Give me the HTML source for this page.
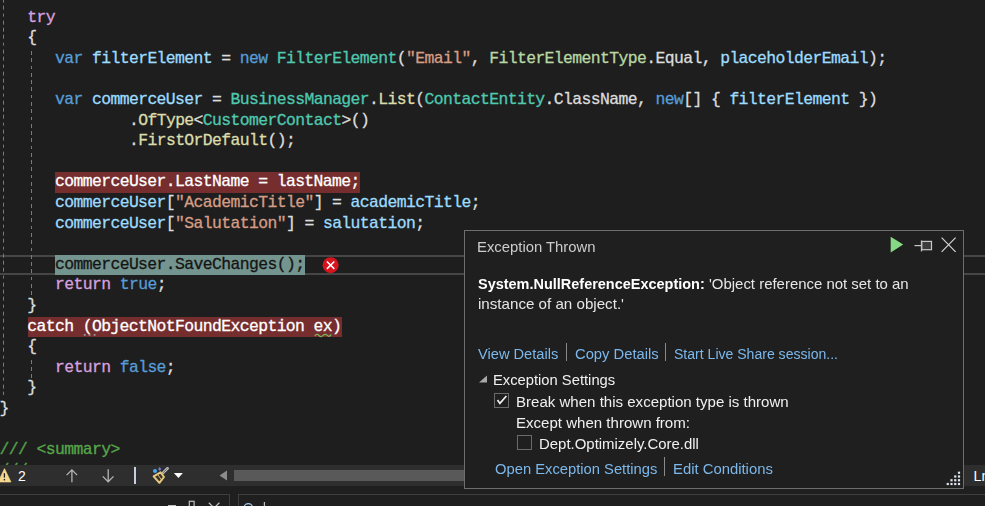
<!DOCTYPE html>
<html><head><meta charset="utf-8"><style>
html,body{margin:0;padding:0;}
body{width:985px;height:506px;overflow:hidden;position:relative;background:#1e1e1e;}
.ln{position:absolute;left:0;height:20.60px;line-height:20.60px;white-space:pre;font-family:"Liberation Mono",monospace;font-size:16.40px;letter-spacing:-0.6001px;-webkit-text-stroke-width:0.3px;color:#dcdcdc;}
.kw{color:#569cd6}.ctl{color:#d8a0df}.ty{color:#4ec9b0}.en{color:#b8d7a3}.me{color:#dcdcaa}.lo{color:#9cdcfe}.st{color:#d69d85}.pu{color:#dcdcdc}.cm{color:#55a049}.cm2{color:#57a64a}.wh{color:#ffffff}.dk{color:#141414}
.hl{position:absolute;}
.guide{position:absolute;width:1px;background:repeating-linear-gradient(to bottom,#7a7a7a 0 3.7px,transparent 3.7px 7.28px);}
.sans{font-family:"Liberation Sans",sans-serif;position:absolute;white-space:pre;will-change:transform;}
svg{position:absolute;}
</style></head><body>

<div class="hl" style="left:0.00px;top:255.00px;width:985.00px;height:2.00px;background:#464646;"></div>
<div class="hl" style="left:0.00px;top:273.00px;width:985.00px;height:2.00px;background:#464646;"></div>
<div class="hl" style="left:55.00px;top:172.00px;width:305.00px;height:21.00px;background:#762d2e;"></div>
<div class="hl" style="left:55.00px;top:255.00px;width:250.00px;height:20.00px;background:#74958f;"></div>
<div class="hl" style="left:27.50px;top:317.00px;width:314.30px;height:20.00px;background:#762d2e;"></div>
<div class="guide" style="left:3px;top:0;height:395.3px;background-position:0 -1.38px"></div>
<div class="guide" style="left:31px;top:50.9px;height:243.8px"></div>
<div class="guide" style="left:31px;top:360px;height:17.5px;background-image:repeating-linear-gradient(to bottom,#7a7a7a 0 3.6px,transparent 3.6px 7.1px)"></div>
<div class="ln" style="top:7.60px;left:27.28px"><span class="ctl">try</span></div>
<div class="ln" style="top:28.20px;left:27.28px"><span class="pu">{</span></div>
<div class="ln" style="top:48.80px;left:55.01px"><span class="kw">var</span><span class="pu"> </span><span class="lo">filterElement</span><span class="pu"> = </span><span class="kw">new</span><span class="pu"> </span><span class="ty">FilterElement</span><span class="pu">(</span><span class="st">"Email"</span><span class="pu">, </span><span class="en">FilterElementType</span><span class="pu">.</span><span class="pu">Equal</span><span class="pu">, </span><span class="lo">placeholderEmail</span><span class="pu">);</span></div>
<div class="ln" style="top:90.00px;left:55.01px"><span class="kw">var</span><span class="pu"> </span><span class="lo">commerceUser</span><span class="pu"> = </span><span class="ty">BusinessManager</span><span class="pu">.</span><span class="me">List</span><span class="pu">(</span><span class="ty">ContactEntity</span><span class="pu">.</span><span class="pu">ClassName</span><span class="pu">, </span><span class="kw">new</span><span class="pu">[] { </span><span class="lo">filterElement</span><span class="pu"> })</span></div>
<div class="ln" style="top:110.60px;left:128.94px"><span class="pu">.</span><span class="me">OfType</span><span class="pu">&lt;</span><span class="ty">CustomerContact</span><span class="pu">&gt;()</span></div>
<div class="ln" style="top:131.20px;left:128.94px"><span class="pu">.</span><span class="me">FirstOrDefault</span><span class="pu">();</span></div>
<div class="ln" style="top:172.40px;left:55.01px"><span class="wh">commerceUser.LastName = lastName;</span></div>
<div class="ln" style="top:193.00px;left:55.01px"><span class="lo">commerceUser</span><span class="pu">[</span><span class="st">"AcademicTitle"</span><span class="pu">] = </span><span class="lo">academicTitle</span><span class="pu">;</span></div>
<div class="ln" style="top:213.60px;left:55.01px"><span class="lo">commerceUser</span><span class="pu">[</span><span class="st">"Salutation"</span><span class="pu">] = </span><span class="lo">salutation</span><span class="pu">;</span></div>
<div class="ln" style="top:254.80px;left:55.01px"><span class="dk">commerceUser.SaveChanges();</span></div>
<div class="ln" style="top:275.40px;left:55.01px"><span class="ctl">return</span><span class="pu"> </span><span class="kw">true</span><span class="pu">;</span></div>
<div class="ln" style="top:296.00px;left:27.28px"><span class="pu">}</span></div>
<div class="ln" style="top:316.60px;left:27.28px"><span class="wh">catch (ObjectNotFoundException ex)</span></div>
<div class="ln" style="top:337.20px;left:27.28px"><span class="pu">{</span></div>
<div class="ln" style="top:357.80px;left:55.01px"><span class="ctl">return</span><span class="pu"> </span><span class="kw">false</span><span class="pu">;</span></div>
<div class="ln" style="top:378.40px;left:27.28px"><span class="pu">}</span></div>
<div class="ln" style="top:399.00px;left:-0.44px"><span class="pu">}</span></div>
<div class="ln" style="top:440.20px;left:-0.44px"><span class="cm">///</span><span class="pu"> </span><span class="cm2">&lt;summary&gt;</span></div>
<div class="ln" style="top:460.80px;left:-0.44px"><span class="cm">///</span></div>
<svg style="left:80px;top:330px" width="20" height="10" viewBox="80 330 20 10"><rect x="83.8" y="334" width="1.8" height="1.8" fill="#9a9a9a"/><rect x="88.7" y="334" width="1.8" height="1.8" fill="#9a9a9a"/><rect x="93.7" y="334" width="1.8" height="1.8" fill="#9a9a9a"/></svg>
<svg style="left:312px;top:331px" width="22" height="8" viewBox="312 331 22 8"><path d="M314.8 336 Q316.9 333.2 319 335.5 Q321.1 337.6 323.1 335.4 Q325.2 333.2 327.3 335.4 Q329.3 337.6 331.2 334.4" fill="none" stroke="#7cb35a" stroke-width="1.3"/></svg>
<svg style="left:322px;top:257px" width="17" height="17" viewBox="0 0 17 17"><circle cx="8.6" cy="8.2" r="8" fill="#d7141e"/><path d="M4.9 4.5 L12.3 11.9 M12.3 4.5 L4.9 11.9" stroke="#fff" stroke-width="1.5"/></svg>
<div class="hl" style="left:0.00px;top:465.00px;width:985.00px;height:21.00px;background:#2e2e2e;"></div>
<div class="hl" style="left:0.00px;top:486.00px;width:985.00px;height:20.00px;background:#1f1f1f;"></div>
<div class="hl" style="left:0.00px;top:494.00px;width:230.00px;height:1.00px;background:#3f3f3f;"></div>
<div class="hl" style="left:229.00px;top:494.00px;width:1.00px;height:12.00px;background:#3f3f3f;"></div>
<div class="hl" style="left:238.00px;top:494.00px;width:747.00px;height:1.00px;background:#3f3f3f;"></div>
<div class="hl" style="left:238.00px;top:494.00px;width:1.00px;height:12.00px;background:#3f3f3f;"></div>
<svg style="left:0;top:466px" width="14" height="18" viewBox="0 466 14 18"><path d="M4.5 468.6 L11 482 L-2 482 Z" fill="#f5d88f" stroke="#f5d88f" stroke-width="0.6" stroke-linejoin="round"/><path d="M4.4 473.2 L4.4 477.6" stroke="#1e1e1e" stroke-width="1.3"/><rect x="3.7" y="479" width="1.4" height="1.4" fill="#1e1e1e"/></svg>
<div class="sans" style="left:18.00px;top:466.25px;font-size:14.00px;line-height:20px;color:#ffffff;font-weight:normal;will-change:auto">2</div>
<svg style="left:60px;top:466px" width="60" height="20" viewBox="60 466 60 20"><path d="M71.9 470.2 L71.9 482.3 M66.6 475.1 L71.9 469.9 L77.1 475.1" fill="none" stroke="#b4b4b4" stroke-width="1.3"/><path d="M108.2 469.3 L108.2 481.5 M102.8 476.4 L108.2 481.8 L113.5 476.4" fill="none" stroke="#b4b4b4" stroke-width="1.3"/></svg>
<div class="hl" style="left:134.00px;top:467.20px;width:2.20px;height:16.60px;background:#c8d0e0;"></div>
<svg style="left:148px;top:465px" width="38" height="21" viewBox="148 465 38 21"><circle cx="155" cy="471" r="2" fill="#4aa8f0"/><path d="M159.7 466.9 L161.2 468.9 L159.7 470.9 L158.2 468.9 Z" fill="#7b7bd8"/><path d="M167.6 468.3 L162.2 473.6" stroke="#c8c8c8" stroke-width="2.6" stroke-linecap="round"/><path d="M167.6 468.3 L162.2 473.6" stroke="#555" stroke-width="0.9"/><path d="M153.6 476.4 L160.6 472.4 L164 477 L159.4 482.8 Z" fill="#3a3428" stroke="#e6c77f" stroke-width="2" stroke-linejoin="round"/><path d="M157.6 474.4 L161.8 480.4" stroke="#e6c77f" stroke-width="0.9"/><path d="M173.9 472.9 L182.9 472.9 L178.4 478.1 Z" fill="#ffffff"/></svg>
<svg style="left:218px;top:469px" width="12" height="14" viewBox="218 469 12 14"><path d="M227 470.6 L227 480.5 L219.5 475.5 Z" fill="#8c8c8c"/></svg>
<div class="hl" style="left:234.00px;top:470.20px;width:230.00px;height:10.80px;background:#595959;"></div>
<div class="hl" style="left:167.50px;top:504.60px;width:8.60px;height:2.00px;background:#c0c0c0;"></div>
<svg style="left:186px;top:500px" width="40" height="6" viewBox="186 500 40 6"><rect x="189.3" y="501.3" width="4.8" height="8" fill="none" stroke="#c0c0c0" stroke-width="1.2"/><path d="M208.8 502.8 L219.4 513 M219.4 502.8 L208.8 513" stroke="#c0c0c0" stroke-width="1.2"/><circle cx="248.3" cy="508" r="4.4" fill="none" stroke="#7fb0e0" stroke-width="1.2"/><path d="M264.4 502 L264.4 510" stroke="#c0c0c0" stroke-width="1.2"/></svg>
<svg style="left:240px;top:500px" width="30" height="6" viewBox="240 500 30 6"><circle cx="248.3" cy="508" r="4.4" fill="none" stroke="#9ec4ea" stroke-width="1.2"/><path d="M264.4 502 L264.4 510" stroke="#c0c0c0" stroke-width="1.2"/></svg>
<div class="hl" style="left:464.00px;top:230.00px;width:498.00px;height:257.00px;background:#1f1f1f;border:1px solid #6e6e6e"></div>
<div class="sans" style="left:477.00px;top:237.25px;font-size:14.85px;line-height:20px;color:#cccccc;font-weight:normal;">Exception Thrown</div>
<div class="sans" style="left:478.00px;top:274.28px;font-size:14.48px;line-height:20px;color:#ffffff;font-weight:bold;">System.NullReferenceException:</div>
<div class="sans" style="left:709.00px;top:274.12px;font-size:14.95px;line-height:20px;color:#e6e6e6;font-weight:normal;">&#39;Object reference not set to an</div>
<div class="sans" style="left:478.00px;top:294.15px;font-size:15.15px;line-height:20px;color:#e6e6e6;font-weight:normal;">instance of an object.&#39;</div>
<div class="sans" style="left:478.00px;top:343.82px;font-size:14.65px;line-height:20px;color:#7cb8ec;font-weight:normal;">View Details</div>
<div class="sans" style="left:574.50px;top:343.79px;font-size:14.75px;line-height:20px;color:#7cb8ec;font-weight:normal;">Copy Details</div>
<div class="sans" style="left:674.00px;top:344.03px;font-size:14.05px;line-height:20px;color:#7cb8ec;font-weight:normal;">Start Live Share session...</div>
<div class="hl" style="left:566.00px;top:342.60px;width:1.00px;height:18.30px;background:#8a8a8a;"></div>
<div class="hl" style="left:665.00px;top:342.60px;width:1.00px;height:18.30px;background:#8a8a8a;"></div>
<svg style="left:478px;top:375px" width="10" height="8" viewBox="0 0 10 8"><path d="M9 0.5 L9 7.5 L1 7.5 Z" fill="#a8a8a8"/></svg>
<div class="sans" style="left:493.00px;top:370.39px;font-size:14.75px;line-height:20px;color:#f0f0f0;font-weight:normal;">Exception Settings</div>
<div class="hl" style="left:494.00px;top:392.90px;width:13.00px;height:13.00px;background:#1f1f1f;border:1px solid #6a6a6a"></div>
<svg style="left:494px;top:392.9px" width="15" height="15" viewBox="0 0 15 15"><path d="M3.5 6.9 L5.9 10.4 L12.4 3" fill="none" stroke="#f0f0f0" stroke-width="1.7"/></svg>
<div class="sans" style="left:515.50px;top:391.89px;font-size:15.05px;line-height:20px;color:#f0f0f0;font-weight:normal;">Break when this exception type is thrown</div>
<div class="sans" style="left:515.50px;top:412.89px;font-size:15.05px;line-height:20px;color:#f0f0f0;font-weight:normal;">Except when thrown from:</div>
<div class="hl" style="left:517.00px;top:434.80px;width:13.00px;height:13.00px;background:#1f1f1f;border:1px solid #6a6a6a"></div>
<div class="sans" style="left:538.50px;top:433.82px;font-size:14.95px;line-height:20px;color:#f0f0f0;font-weight:normal;">Dept.Optimizely.Core.dll</div>
<div class="sans" style="left:494.50px;top:458.79px;font-size:14.75px;line-height:20px;color:#7cb8ec;font-weight:normal;">Open Exception Settings</div>
<div class="sans" style="left:673.00px;top:458.75px;font-size:14.85px;line-height:20px;color:#7cb8ec;font-weight:normal;">Edit Conditions</div>
<div class="hl" style="left:664.00px;top:456.50px;width:1.00px;height:19.50px;background:#8a8a8a;"></div>
<svg style="left:886px;top:234px" width="76" height="22" viewBox="886 234 76 22"><path d="M890.7 236.7 L903.2 244.6 L890.7 252.5 Z" fill="#86d886"/><path d="M914.5 245.6 L921 245.6" stroke="#c8c8c8" stroke-width="1.2"/><path d="M921.5 240.5 L921.5 251.4" stroke="#c8c8c8" stroke-width="1.3"/><rect x="921.8" y="241.4" width="9.7" height="8.3" fill="#3c3c3c" stroke="#c8c8c8" stroke-width="1.2"/><path d="M941.6 237.6 L955.6 251.8 M955.6 237.6 L941.6 251.8" stroke="#d4d4d4" stroke-width="1.2"/></svg>
<svg style="left:944px;top:470px" width="18" height="18"><rect x="13.90" y="1.65" width="2.2" height="2.2" fill="#e0e4ec"/><rect x="13.90" y="5.40" width="2.2" height="2.2" fill="#e0e4ec"/><rect x="10.15" y="5.40" width="2.2" height="2.2" fill="#e0e4ec"/><rect x="13.90" y="9.15" width="2.2" height="2.2" fill="#e0e4ec"/><rect x="10.15" y="9.15" width="2.2" height="2.2" fill="#e0e4ec"/><rect x="6.40" y="9.15" width="2.2" height="2.2" fill="#e0e4ec"/><rect x="13.90" y="12.90" width="2.2" height="2.2" fill="#e0e4ec"/><rect x="10.15" y="12.90" width="2.2" height="2.2" fill="#e0e4ec"/><rect x="6.40" y="12.90" width="2.2" height="2.2" fill="#e0e4ec"/><rect x="2.65" y="12.90" width="2.2" height="2.2" fill="#e0e4ec"/></svg>
<div class="hl" style="left:964.00px;top:465.00px;width:21.00px;height:21.00px;background:#2e2e2e;"></div>
<div class="sans" style="left:973.50px;top:465.71px;font-size:14.40px;line-height:20px;color:#ffffff;font-weight:normal;will-change:auto">Ln</div>
</body></html>
